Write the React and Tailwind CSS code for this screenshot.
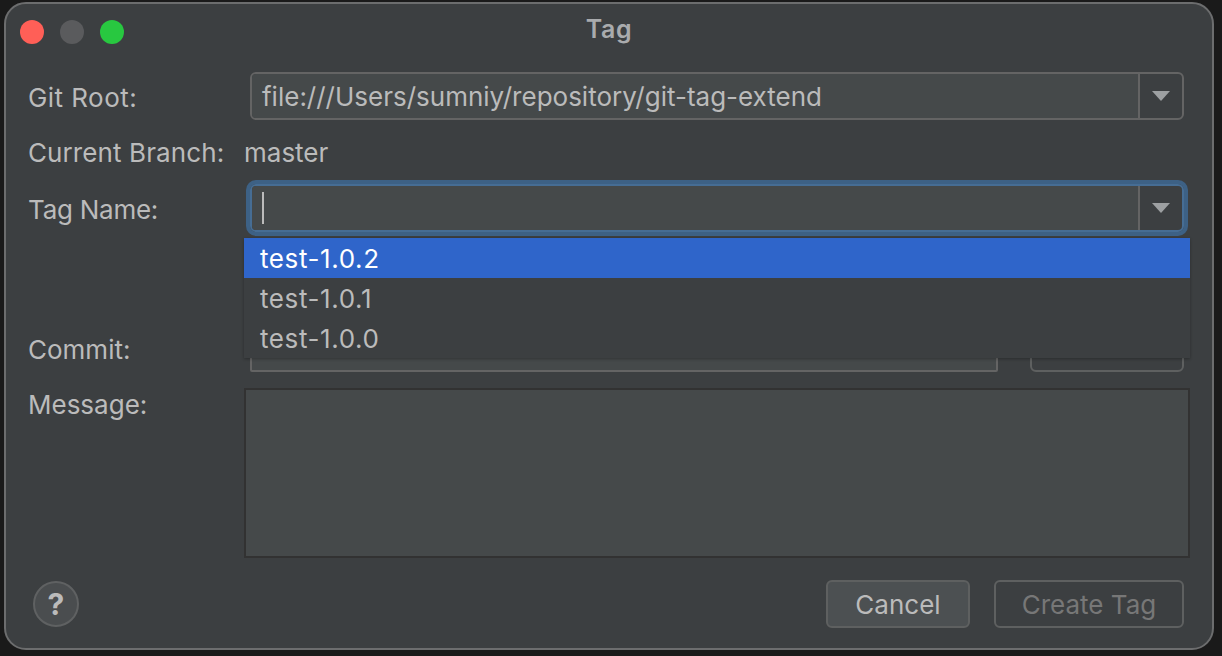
import { useState } from 'react';

const font = { fontFamily: 'Inter, "Liberation Sans", sans-serif' };

const Arrow = () => (
  <svg width="18" height="10" viewBox="0 0 18 10">
    <path d="M0 0H18L9 10Z" fill="#9da0a2" />
  </svg>
);

const ComboBox = ({ value, focused, children }) => (
  <div className={`relative flex h-[48px] w-[934px] rounded-[6px] border-2 ${focused ? 'border-[#466d94] shadow-[0_0_0_4px_#3d6185]' : 'border-[#646464]'}`}>
    <div className="flex flex-1 items-center rounded-l-[4px] bg-[#45494a] pl-[10px] text-[26px] text-[#bbbbbb]">
      {value}
      {children}
    </div>
    <div className="flex w-[44px] items-center justify-center border-l-2 border-[#646464]">
      <Arrow />
    </div>
  </div>
);

const Row = ({ label, labelClass = '', className, children }) => (
  <div className={`flex items-center ${className}`}>
    <div className={`w-[222px] shrink-0 pt-[3px] text-[26px] leading-[32px] text-[#bbbbbb] ${labelClass}`}>{label}</div>
    {children}
  </div>
);

export default function App() {
  const [tags] = useState(['test-1.0.2', 'test-1.0.1', 'test-1.0.0']);

  return (
    <div className="h-[656px] w-[1222px] bg-[#1a1a1a] pl-[4px] pt-[2px] antialiased" style={font}>
      <div className="relative flex h-[648px] w-[1210px] flex-col rounded-[22px] border-2 border-[#6c6d6e] bg-[#3c3f41]">
        {/* title bar */}
        <div className="relative flex h-[52px] items-center justify-center">
          <div className="absolute left-[14px] top-[16px] flex gap-[16px]">
            <span className="h-[24px] w-[24px] rounded-full bg-[#ff5f57]" />
            <span className="h-[24px] w-[24px] rounded-full bg-[#5a5b5d]" />
            <span className="h-[24px] w-[24px] rounded-full bg-[#28c840]" />
          </div>
          <span className="text-[25px] font-semibold tracking-[0.6px] text-[#a9abad]">Tag</span>
        </div>

        {/* form */}
        <div className="flex flex-col pl-[22px]">
          <Row label="Git Root:" labelClass="tracking-[0.45px]" className="mt-[16px]">
            <ComboBox value="file:///Users/sumniy/repository/git-tag-extend" />
          </Row>
          <div className="mt-[16px] flex h-[32px] items-center text-[26px] text-[#bbbbbb]">
            <div className="w-[216px] shrink-0 tracking-[0.1px]">Current Branch:</div>
            <div>master</div>
          </div>
          <Row label="Tag Name:" labelClass="tracking-[-0.25px]" className="mt-[16px]">
            <ComboBox focused>
              <span className="h-[32px] w-[2px] bg-[#bbbbbb]" />
            </ComboBox>
          </Row>
          <Row label="Commit:" className="mt-[92px]">
            <div className="h-[48px] w-[748px] rounded-[2px] border-2 border-[#646464] bg-[#45494a]" />
            <div className="ml-[32px] h-[48px] w-[154px] rounded-[6px] border-2 border-[#5e6060]" />
          </Row>
          <div className="mt-[16px] flex">
            <div className="w-[216px] shrink-0 pt-[1px] text-[26px] leading-[32px] text-[#bbbbbb]">Message:</div>
            <div className="h-[170px] w-[946px] shrink-0 border-2 border-[#323232] bg-[#45494a]" />
          </div>
        </div>

        {/* footer */}
        <div className="mt-[22px] flex items-center justify-between pl-[27px] pr-[28px]">
          <div className="flex h-[46px] w-[46px] items-center justify-center rounded-full border-2 border-[#5f6162] bg-[#4a4d4f] text-[30px] font-bold text-[#bbbbbb]">?</div>
          <div className="flex gap-[24px]">
            <div className="flex h-[48px] w-[144px] items-center justify-center rounded-[6px] border-2 border-[#5e6060] bg-[#4c5052] text-[26px] text-[#bbbbbb]">Cancel</div>
            <div className="flex h-[48px] w-[190px] items-center justify-center rounded-[6px] border-2 border-[#5e6060] text-[26px] text-[#777777]">Create Tag</div>
          </div>
        </div>

        {/* open dropdown */}
        <div className="absolute left-[238px] top-[234px] w-[946px] bg-[#3c3f41] shadow-[0_1px_3px_rgba(0,0,0,0.3)]">
          {tags.map((t, i) => (
            <div key={t} className={`flex h-[40px] items-center pl-[16px] text-[26px] tracking-[0.6px] ${i === 0 ? 'bg-[#2f65ca] text-white' : 'text-[#bbbbbb]'}`}>
              {t}
            </div>
          ))}
        </div>
      </div>
    </div>
  );
}
